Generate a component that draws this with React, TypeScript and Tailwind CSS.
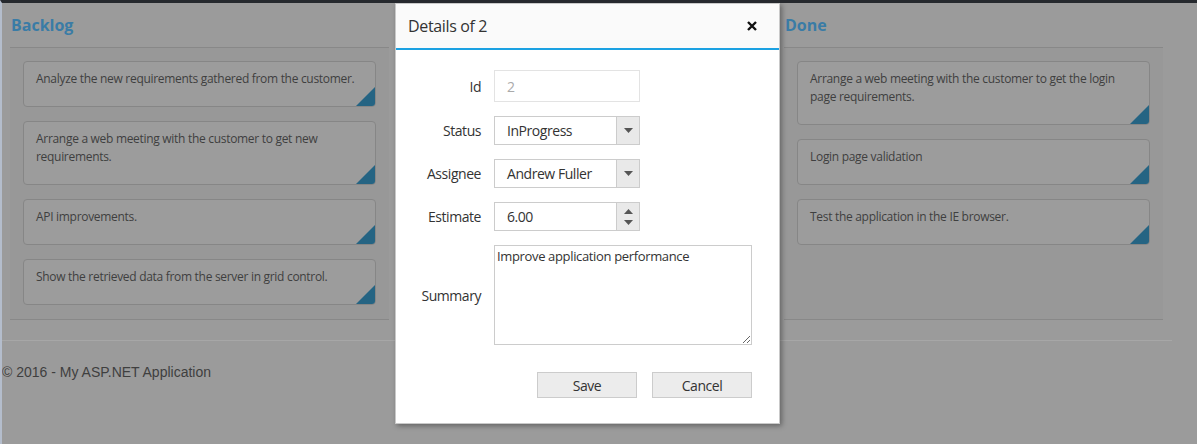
const FONT = { fontFamily: '"Open Sans", "Noto Sans", sans-serif' }

const backlog = [
  'Analyze the new requirements gathered from the customer.',
  'Arrange a web meeting with the customer to get new requirements.',
  'API improvements.',
  'Show the retrieved data from the server in grid control.',
]

const done = [
  'Arrange a web meeting with the customer to get the login page requirements.',
  'Login page validation',
  'Test the application in the IE browser.',
]

function Card({ text }: { text: string }) {
  return (
    <div className="relative overflow-hidden rounded-[4px] border border-[#868686] bg-[#9c9c9c] px-3 pt-2 pb-[18px] text-[12px] leading-[18px] tracking-[-0.3px] text-[#3f3f3f]">
      {text}
      <svg className="absolute right-0 bottom-0" width="19" height="19" viewBox="0 0 19 19">
        <polygon points="19,0 19,19 0,19" fill="#256483" />
      </svg>
    </div>
  )
}

function Column({ title, cards }: { title: string; cards: string[] }) {
  return (
    <div className="flex flex-col">
      <div className="flex h-[45px] items-center border-b border-[#888888] pl-[1px]">
        <h2 className="text-[16px] font-bold text-[#3a7ca6]">{title}</h2>
      </div>
      <div className="flex flex-1 flex-col gap-[14px] border-b border-[#888888] bg-[#989898] px-[13px] pt-[13px] pb-[14px]">
        {cards.map((c) => (
          <Card key={c} text={c} />
        ))}
      </div>
    </div>
  )
}

function Arrow({ up }: { up?: boolean }) {
  return (
    <svg width="9" height="5" viewBox="0 0 9 5">
      <polygon points={up ? '0,5 9,5 4.5,0' : '0,0 9,0 4.5,5'} fill="#555555" />
    </svg>
  )
}

function Row({ label, children }: { label: string; children: React.ReactNode }) {
  return (
    <div className="flex items-center">
      <label className="w-[85px] text-right text-[14px] tracking-[-0.45px] text-[#333333]">{label}</label>
      <div className="ml-[13px]">{children}</div>
    </div>
  )
}

function Dropdown({ value }: { value: string }) {
  return (
    <div className="flex h-[29px] w-[146px] border border-[#cccccc] bg-white">
      <div className="flex flex-1 items-center pl-3 text-[14px] tracking-[-0.45px] text-[#333333]">{value}</div>
      <div className="flex w-[23px] items-center justify-center border-l border-[#cccccc] bg-[#e9e9e9]">
        <Arrow />
      </div>
    </div>
  )
}

export default function App() {
  return (
    <div className="relative h-[444px] w-full overflow-hidden border-t-[3px] border-l-2 border-t-[#26292e] border-l-[#b4bdcc] bg-[#9b9b9b]" style={FONT}>
      <div className="w-[1170px]">
        <div className="grid grid-cols-[379px_379px_379px] gap-x-2 pl-2">
          <Column title="Backlog" cards={backlog} />
          <Column title="" cards={[]} />
          <Column title="Done" cards={done} />
        </div>
        <div className="mt-5 border-t border-[#a7a7a7]" />
        <p className="mt-[21px] text-[14px] leading-5 text-[#3f3f3f]" style={{ fontFamily: '"Liberation Sans", Arial, sans-serif' }}>
          © 2016 - My ASP.NET Application
        </p>
      </div>

      {/* Modal dialog */}
      <div className="absolute top-0 left-[393px] flex h-[421px] w-[385px] flex-col border border-[#c9c9c9] bg-white shadow-[2px_2px_5px_rgba(0,0,0,0.35)]">
        <div className="flex h-[46px] items-center justify-between border-b-2 border-[#1ba1e2] bg-[#fafafa] pr-[22px] pl-3">
          <span className="text-[16px] tracking-[-0.35px] text-[#333333]">Details of 2</span>
          <svg width="10" height="10" viewBox="0 0 10 10">
            <path d="M1 1 L9 9 M9 1 L1 9" stroke="#111111" strokeWidth="2.4" />
          </svg>
        </div>

        <div className="flex flex-col gap-[14px] pt-5">
          <Row label="Id">
            <div className="flex h-[32px] w-[146px] items-center border border-[#e3e3e3] bg-white pl-3 text-[14px] text-[#aaaaaa]">2</div>
          </Row>
          <Row label="Status">
            <Dropdown value="InProgress" />
          </Row>
          <Row label="Assignee">
            <Dropdown value="Andrew Fuller" />
          </Row>
          <Row label="Estimate">
            <div className="flex h-[29px] w-[146px] border border-[#cccccc] bg-white">
              <div className="flex flex-1 items-center pl-3 text-[14px] tracking-[-0.45px] text-[#333333]">6.00</div>
              <div className="flex w-[23px] flex-col items-center justify-center gap-[6px] border-l border-[#cccccc] bg-[#e9e9e9]">
                <Arrow up />
                <Arrow />
              </div>
            </div>
          </Row>
          <Row label="Summary">
            <textarea
              readOnly
              defaultValue="Improve application performance"
              className="block h-[100px] w-[258px] border border-[#cccccc] px-[2px] py-[1px] text-[13px] tracking-[-0.35px] text-[#333333] outline-none"
              style={FONT}
            />
          </Row>
        </div>

        <div className="mt-[27px] flex justify-end gap-[15px] pr-[27px]">
          <button className="h-[26px] w-[100px] border border-[#cccccc] bg-[#ececec] text-[14px] tracking-[-0.45px] text-[#333333]">Save</button>
          <button className="h-[26px] w-[100px] border border-[#cccccc] bg-[#ececec] text-[14px] tracking-[-0.45px] text-[#333333]">Cancel</button>
        </div>
      </div>
    </div>
  )
}
